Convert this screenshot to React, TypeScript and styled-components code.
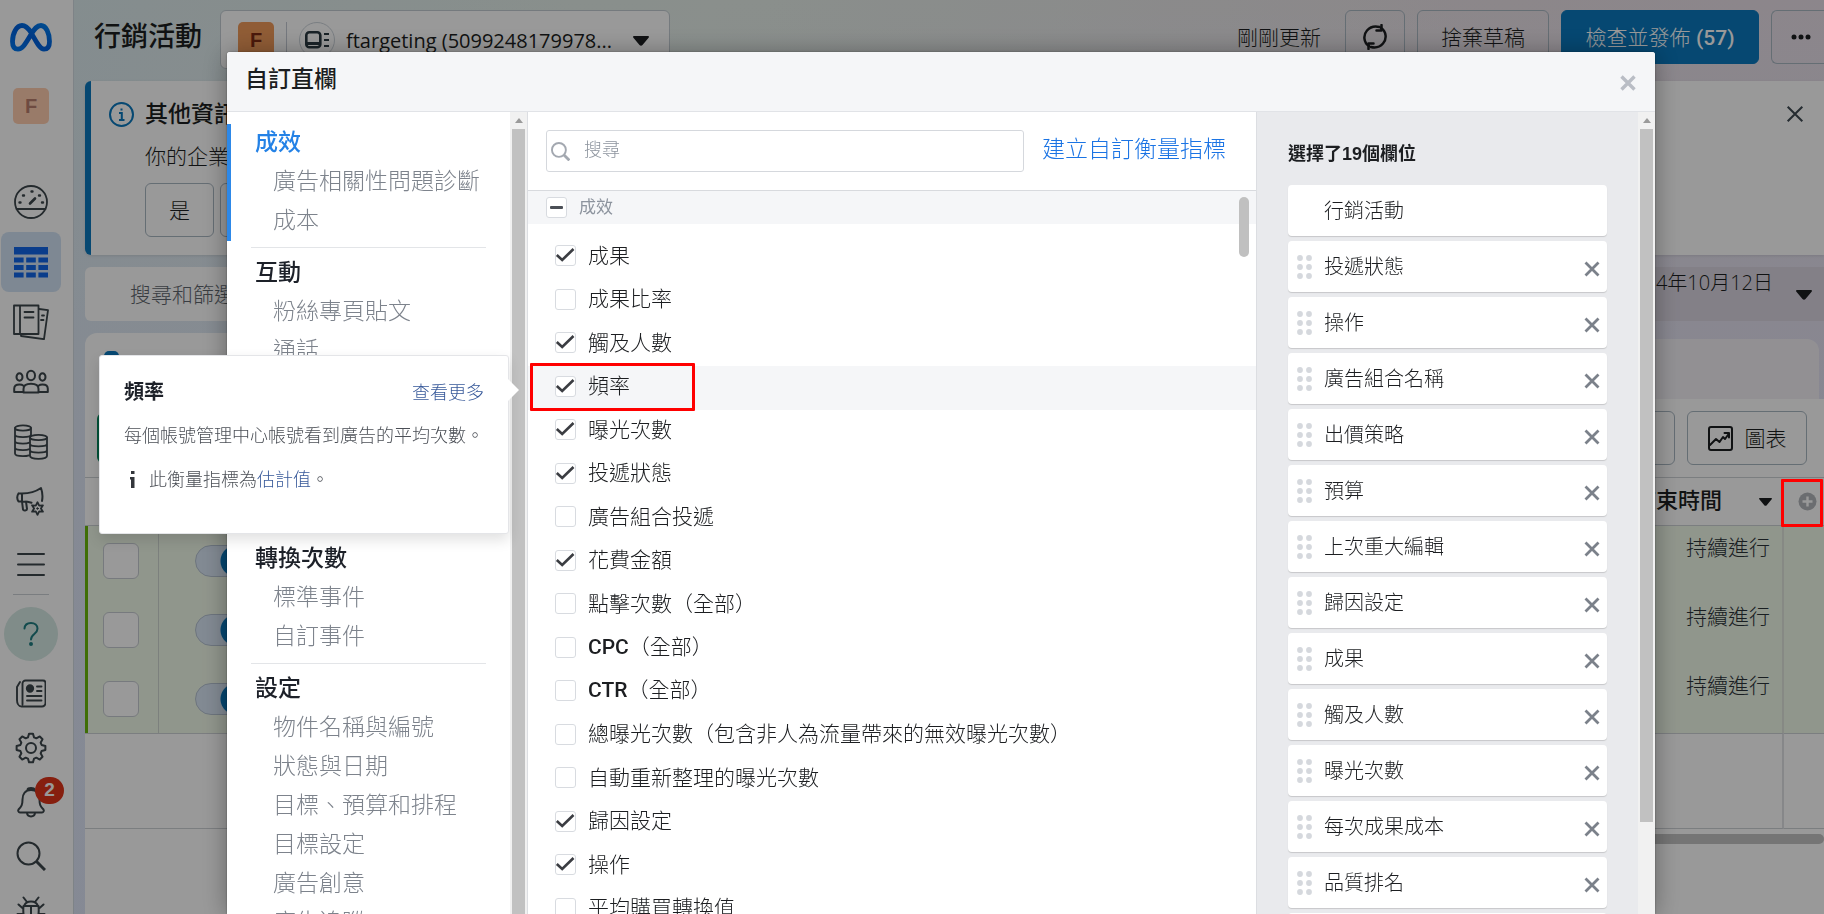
import React, { useState } from 'react';
import styled, { createGlobalStyle, css } from 'styled-components';

const GlobalStyle = createGlobalStyle`
  *, *::before, *::after { box-sizing: border-box; }
  html, body { margin: 0; height: 100%; overflow: hidden; }
  body {
    font-family: "Open Sans", "Noto Sans CJK TC", sans-serif;
    font-weight: 300;
    color: #1c1e21;
    background: #fff;
  }
  button, input { font: inherit; color: inherit; }
  button { padding: 0; border: 0; background: none; cursor: pointer; white-space: nowrap; }
  a { text-decoration: none; }
  h1, h2, h3, p, ul { margin: 0; padding: 0; }
  li { list-style: none; }
  svg { display: block; flex: none; }
`;

/* ---------- page behind the dialog ---------- */

const Page = styled.div`
  display: flex;
  height: 100vh;
  overflow: hidden;
  background:
    linear-gradient(180deg, rgba(222, 228, 250, 0) 0%, rgba(222, 228, 250, 0.8) 60%),
    linear-gradient(100deg, #dcebee 0%, #e6efe9 36%, #e9e1e7 76%, #e9dfe9 100%);
`;

const Sidebar = styled.nav`
  flex: none;
  width: 74px;
  height: 100%;
  padding: 23px 12px 0 1px;
  display: flex;
  flex-direction: column;
  align-items: center;
  background: #fff;
  border-right: 1px solid #d3dae2;
  color: #3c464c;
`;

const Avatar = styled.span<{ $tone: 'pale' | 'strong' }>`
  display: grid;
  place-items: center;
  flex: none;
  width: 36px;
  height: 36px;
  border-radius: 5px;
  font-family: "Liberation Sans", sans-serif;
  font-weight: 700;
  font-size: 20px;
  ${(p) => (p.$tone === 'pale'
    ? css`background: #ffceb0; color: #b87e6d;`
    : css`background: #f09a5a; color: #7d2a12;`)}
`;

const SideGroup = styled.ul<{ $top: number }>`
  margin-top: ${(p) => p.$top}px;
`;

const SideButton = styled.button<{ $size: number; $active?: boolean }>`
  position: relative;
  display: grid;
  place-items: center;
  width: 60px;
  height: ${(p) => p.$size}px;
  border-radius: 8px;
  background: ${(p) => (p.$active ? '#d2e3f5' : 'transparent')};
  color: ${(p) => (p.$active ? '#1267e8' : 'inherit')};
`;

const Badge = styled.span`
  position: absolute;
  top: 2px;
  right: -3px;
  width: 29px;
  height: 27px;
  border-radius: 14px;
  background: #e0341a;
  color: #fff;
  font: 700 19px/26px "Liberation Sans", sans-serif;
  text-align: center;
`;

const SideRule = styled.hr`
  width: 36px;
  margin: 2px 0 12px;
  border: 0;
  border-top: 1px solid #ccd0d5;
`;

const HelpButton = styled.button`
  display: grid;
  place-items: center;
  flex: none;
  width: 54px;
  height: 54px;
  border-radius: 50%;
  background: #d5e9e4;
  color: #1f7d80;
`;

const Content = styled.div`
  flex: 1;
  min-width: 0;
  display: flex;
  flex-direction: column;
  padding-left: 11px;
`;

const TopBar = styled.header`
  display: flex;
  align-items: flex-start;
  flex: none;
  height: 81px;
  padding: 10px 0 0 9px;
`;

const PageTitle = styled.h1`
  margin-right: 18px;
  font-size: 27px;
  line-height: 52px;
  font-weight: 500;
  white-space: nowrap;
`;

const AccountPicker = styled.button`
  display: flex;
  align-items: flex-start;
  width: 450px;
  height: 59px;
  padding: 11px 20px 0 17px;
  background: #fff;
  border: 1px solid #c3ccd3;
  border-radius: 6px;
  font-size: 20px;
  font-weight: 400;
  line-height: 28px;
  text-align: left;
`;

const PickerRule = styled.span`
  width: 1px;
  height: 36px;
  margin: 0 12px;
  background: #c3c9d3;
`;

const PickerIcon = styled.span`
  display: grid;
  place-items: center;
  width: 36px;
  height: 36px;
  margin-right: 11px;
  border: 1px solid #ccd3da;
  border-radius: 50%;
`;

const PickerName = styled.span`
  flex: 1;
  padding-top: 5px;
`;

const PickerCaret = styled.span`
  padding-top: 14px;
`;

const TopActions = styled.div`
  display: flex;
  gap: 12px;
  margin-left: auto;
`;

const Updated = styled.span`
  margin-right: 12px;
  font-size: 21px;
  line-height: 54px;
  white-space: nowrap;
`;

const Button = styled.button<{ $width: number; $primary?: boolean; $cut?: boolean }>`
  display: flex;
  align-items: center;
  justify-content: center;
  gap: 12px;
  flex: none;
  width: ${(p) => p.$width}px;
  height: 54px;
  border: 1px solid #a9b7c2;
  border-radius: 6px;
  font-size: 21px;
  ${(p) => p.$primary && css`
    border-color: #0a78be;
    background: #0a78be;
    color: #fff;
  `}
  ${(p) => p.$cut && css`
    border-right: 0;
    border-radius: 6px 0 0 6px;
    padding-left: 6px;
  `}
`;

const ButtonText = styled.span`
  padding-bottom: 3px;
`;

const Strong = styled.span`
  font-family: Roboto, "Liberation Sans", sans-serif;
  font-weight: 500;
`;

const Notice = styled.section`
  flex: none;
  display: flex;
  align-items: flex-start;
  height: 174px;
  margin-bottom: 12px;
  padding: 19px 20px 0 18px;
  border-left: 6px solid #0a78be;
  border-radius: 6px 0 0 6px;
  background: #fff;
  box-shadow: 0 1px 3px rgba(0, 0, 0, 0.1);
`;

const NoticeIcon = styled.span`
  margin: 2px 11px 0 0;
`;

const NoticeBody = styled.div`
  flex: 1;
`;

const NoticeTitle = styled.h2`
  font-size: 23px;
  line-height: 26px;
  font-weight: 500;
`;

const NoticeText = styled.p`
  margin: 15px 0 12px;
  font-size: 21px;
  line-height: 30px;
`;

const ButtonRow = styled.div`
  display: flex;
  gap: 6px;
`;

const NoticeClose = styled.button`
  margin-top: 5px;
`;

const FilterRow = styled.div`
  display: flex;
  flex: none;
  height: 54px;
  margin-bottom: 12px;
`;

const FilterInput = styled.input`
  flex: 1;
  min-width: 0;
  padding: 0 0 0 45px;
  border: 0;
  border-radius: 6px 0 0 6px;
  background: #fff;
  font-size: 21px;
  &::placeholder { color: #5f676e; opacity: 1; }
`;

const DateButton = styled.button`
  display: flex;
  align-items: flex-start;
  justify-content: flex-end;
  gap: 23px;
  width: 420px;
  padding: 2px 12px 0 0;
  background: #dbd6e2;
  font-size: 20px;
  line-height: 28px;
`;

const DateCaret = styled.span`
  padding-top: 21px;
`;

const TabRow = styled.div`
  display: flex;
  align-items: flex-end;
  flex: none;
  height: 66px;
  padding-right: 5px;
`;

const ActiveTab = styled.div`
  width: 460px;
  height: 66px;
  padding: 18px 0 0 19px;
  border-radius: 12px 12px 0 0;
  background: #fff;
`;

const TabIcon = styled.span`
  display: block;
  width: 15px;
  height: 20px;
  border-radius: 5px;
  background: #0a78be;
`;

const RestTabs = styled.div`
  flex: 1;
  height: 60px;
  border-radius: 0 12px 0 0;
  background: #f3f1f6;
`;

const Panel = styled.section`
  flex: 1;
  min-height: 0;
  background: #fff;
`;

const PanelBar = styled.div`
  display: flex;
  gap: 12px;
  height: 78px;
  padding: 12px 17px 0 12px;
`;

const CreateButton = styled.button`
  width: 110px;
  height: 50px;
  margin: 2px auto 0 0;
  border-radius: 6px;
  background: #00855a;
  color: #fff;
  font-size: 21px;
`;

const Table = styled.table`
  width: 100%;
  border-collapse: separate;
  border-spacing: 0;
  table-layout: fixed;
`;

const HeadCell = styled.th<{ $width?: number }>`
  width: ${(p) => (p.$width ? `${p.$width}px` : 'auto')};
  height: 49px;
  padding: 0 12px 0 0;
  border-top: 1px solid #ced2d6;
  border-bottom: 1px solid #ced2d6;
  font-size: 22px;
  font-weight: 500;
  text-align: right;
`;

const HeadLabel = styled.span`
  display: flex;
  align-items: center;
  justify-content: flex-end;
  gap: 37px;
  line-height: 26px;
  white-space: nowrap;
`;

const HeadText = styled.span`
  padding-bottom: 5px;
`;

const AddColumn = styled.button`
  display: block;
  margin-left: 14px;
`;

const Cell = styled.td<{ $kind?: 'first' | 'line' | 'time' }>`
  height: 69px;
  padding: 0;
  vertical-align: top;
  background: #f1faea;
  ${(p) => p.$kind === 'first' && css`
    border-left: 3px solid #69b80a;
    border-right: 1px solid #cfd6d0;
    padding: 17px 0 0 15px;
  `}
  ${(p) => p.$kind === 'line' && css`padding: 19px 0 0 36px;`}
  ${(p) => p.$kind === 'time' && css`
    padding: 6px 12px 0 0;
    border-right: 2px solid #dfe4dc;
    font-size: 21px;
    line-height: 30px;
    text-align: right;
    color: #2a3238;
  `}
`;

const FootCell = styled.td<{ $ruled?: boolean }>`
  height: 96px;
  border-top: 1px solid #ced2d6;
  border-bottom: 1px solid #ced2d6;
  ${(p) => p.$ruled && css`border-right: 2px solid #e0e2e4;`}
`;

const RowCheck = styled.input`
  display: block;
  appearance: none;
  width: 36px;
  height: 36px;
  margin: 0;
  border: 1px solid #c7ccd2;
  border-radius: 6px;
  background: #fff;
`;

const Toggle = styled.input`
  display: block;
  appearance: none;
  width: 56px;
  height: 32px;
  margin: 0;
  border: 1px solid #b6c3d2;
  border-radius: 16px;
  background: radial-gradient(circle at 40px 50%, #0a78be 15px, #d9e6f5 16px);
`;

const TrackBar = styled.div`
  width: 40%;
  height: 10px;
  margin: 5px 0 0 auto;
  border-radius: 5px;
  background: #c3c3c3;
`;

/* ---------- dialog layer ---------- */

const Layer = styled.div`
  position: fixed;
  inset: 0;
  padding: 52px 169px 0 227px;
  background: rgba(0, 0, 0, 0.4);
`;

const Dialog = styled.section`
  display: flex;
  flex-direction: column;
  height: 100%;
  overflow: hidden;
  border-radius: 3px 3px 0 0;
  background: #fff;
  box-shadow: 0 2px 26px rgba(0, 0, 0, 0.35), 0 0 2px rgba(0, 0, 0, 0.4);
`;

const DialogHead = styled.header`
  display: flex;
  align-items: center;
  justify-content: space-between;
  flex: none;
  height: 60px;
  padding: 0 19px 8px 18px;
  border-bottom: 1px solid #e1e3e7;
  background: #f5f6f8;
`;

const DialogTitle = styled.h2`
  font-size: 23px;
  line-height: 30px;
  font-weight: 500;
`;

const DialogClose = styled.button`
  padding-top: 10px;
`;

const DialogBody = styled.div`
  display: grid;
  grid-template-columns: 301px minmax(0, 1fr) 398px;
  flex: 1;
  min-height: 0;
`;

const NavPane = styled.nav`
  display: flex;
  min-height: 0;
  border-right: 1px solid #dcdee2;
`;

const NavList = styled.div`
  flex: 1;
  padding-top: 12px;
  overflow: hidden;
`;

const NavSection = styled.section<{ $active?: boolean }>`
  border-left: 4px solid ${(p) => (p.$active ? '#2d88e8' : 'transparent')};
`;

const NavRule = styled.hr`
  margin: 6px 24px;
  border: 0;
  border-top: 1px solid #e3e5e8;
`;

const NavHeading = styled.a<{ $active?: boolean }>`
  display: block;
  height: 39px;
  padding-left: 24px;
  font-size: 23px;
  line-height: 34px;
  font-weight: 500;
  color: ${(p) => (p.$active ? '#2482e6' : '#1d2129')};
`;

const NavItem = styled.a`
  display: block;
  height: 39px;
  padding-left: 42px;
  font-size: 23px;
  line-height: 34px;
  white-space: nowrap;
  color: #7d838c;
`;

const Scrollbar = styled.div`
  display: flex;
  flex-direction: column;
  align-items: center;
  flex: none;
  width: 17px;
  height: 100%;
  padding-top: 6px;
  background: #f1f1f1;
`;

const Thumb = styled.div<{ $gap?: number }>`
  flex: 1;
  width: 13px;
  margin: 6px 0 ${(p) => p.$gap || 0}px;
  background: #c1c1c1;
`;

const MetricsPane = styled.div`
  display: flex;
  flex-direction: column;
  min-height: 0;
  border-right: 1px solid #dcdee2;
`;

const SearchRow = styled.div`
  display: flex;
  align-items: center;
  gap: 18px;
  flex: none;
  height: 79px;
  padding: 0 30px 0 18px;
  border-bottom: 1px solid #d8dade;
`;

const SearchField = styled.label`
  display: flex;
  align-items: center;
  gap: 14px;
  flex: 1;
  min-width: 0;
  height: 42px;
  padding: 0 4px;
  border: 1px solid #d5d8dd;
  border-radius: 3px;
`;

const GlyphWrap = styled.span`
  display: block;
  color: #a3a8b0;
`;

const SearchInput = styled.input`
  flex: 1;
  min-width: 0;
  height: 36px;
  padding: 0 0 4px;
  border: 0;
  outline: 0;
  background: none;
  font-size: 18px;
  &::placeholder { color: #8d949e; opacity: 1; }
`;

const CustomLink = styled.a`
  padding-bottom: 6px;
  font-size: 23px;
  line-height: 30px;
  white-space: nowrap;
  color: #1b74e4;
`;

const MetricsScroll = styled.div`
  position: relative;
  flex: 1;
  min-height: 0;
  overflow: hidden;
`;

const OverlayThumb = styled.div`
  position: absolute;
  top: 6px;
  right: 7px;
  width: 10px;
  height: 60px;
  border-radius: 5px;
  background: #c0c0c0;
`;

const GroupHead = styled.label`
  display: flex;
  align-items: center;
  gap: 12px;
  height: 33px;
  padding-left: 18px;
  background: #f5f6f8;
  font-size: 17px;
  line-height: 24px;
  font-weight: 400;
  color: #8d949e;
`;

const MetricList = styled.ul`
  display: grid;
  grid-auto-rows: 43px 44px;
  padding-top: 12px;
`;

const MetricItem = styled.li<{ $hover?: boolean }>`
  position: relative;
  display: flex;
  background: ${(p) => (p.$hover ? '#f5f6f8' : 'transparent')};
`;

const MetricLabel = styled.label`
  display: flex;
  align-items: center;
  gap: 12px;
  padding: 0 0 4px 27px;
  font-size: 21px;
  line-height: 30px;
  white-space: nowrap;
  cursor: pointer;
`;

const LabelText = styled.span`
  padding-bottom: 2px;
`;

const Tick = styled.span`
  display: grid;
  flex: none;
  > * { grid-area: 1 / 1; }
  > svg { pointer-events: none; }
`;

const TickInput = styled.input`
  appearance: none;
  width: 21px;
  height: 21px;
  margin: 0;
  border: 1px solid #d8dbe0;
  border-radius: 3px;
  background: #fff;
`;

const rowMark = css`
  left: 2px;
  top: -3px;
  width: 165px;
  height: 48px;
`;

const columnMark = css`
  right: 1px;
  top: 479px;
  width: 42px;
  height: 48px;
`;

const RedMark = styled.span<{ $on: 'row' | 'column' }>`
  position: absolute;
  border: 3px solid #f00;
  border-radius: 1px;
  pointer-events: none;
  ${(p) => (p.$on === 'row' ? rowMark : columnMark)}
`;

const ChosenPane = styled.aside`
  display: flex;
  min-height: 0;
  background: #e9eaed;
`;

const ChosenList = styled.div`
  flex: 1;
  padding: 31px 31px 0;
  overflow: hidden;
`;

const ChosenTitle = styled.h3`
  margin-bottom: 20px;
  font-family: "Liberation Sans", "Noto Sans CJK TC", sans-serif;
  font-size: 18px;
  line-height: 22px;
  font-weight: 700;
  white-space: nowrap;
`;

const ChosenItems = styled.ul`
  display: flex;
  flex-direction: column;
  gap: 5px;
`;

const ChosenCard = styled.li`
  display: flex;
  align-items: center;
  height: 51px;
  padding: 0 7px 0 8px;
  border-radius: 4px;
  background: #fff;
  box-shadow: 0 1px 1px rgba(0, 0, 0, 0.15);
  font-size: 20px;
  line-height: 28px;
`;

const Handle = styled.span`
  width: 28px;
`;

const CardName = styled.span`
  flex: 1;
`;

const RemoveButton = styled.button`
  padding-top: 4px;
`;

/* ---------- metric tooltip ---------- */

const Tip = styled.aside`
  position: absolute;
  left: 99px;
  top: 355px;
  width: 410px;
  height: 179px;
  padding: 22px 24px 0;
  border: 1px solid #e4e5e8;
  border-radius: 3px;
  background: #fff;
  box-shadow: 0 6px 14px rgba(0, 0, 0, 0.12);
  font-size: 18px;
  line-height: 28px;
  color: #4b4f56;
`;

const TipArrow = styled.svg`
  position: absolute;
  left: 408px;
  top: 23px;
`;

const TipHead = styled.div`
  display: flex;
  justify-content: space-between;
  margin-bottom: 15px;
`;

const TipTitle = styled.h3`
  font-size: 20px;
  line-height: 28px;
  font-weight: 700;
  color: #1d2129;
`;

const TipLink = styled.a`
  color: #365899;
`;

const TipNote = styled.p`
  display: flex;
  align-items: center;
  gap: 11px;
  margin-top: 16px;
`;

/* ---------- drawings ---------- */

const Icon = ({ size = 36, children, w = 2 }: { size?: number; w?: number; children: React.ReactNode }) => (
  <svg width={size} height={size} viewBox={`0 0 ${size} ${size}`} fill="none" stroke="currentColor" strokeWidth={w}
    strokeLinecap="round" strokeLinejoin="round" aria-hidden="true">{children}</svg>
);

const MetaLogo = () => (
  <svg width="42" height="29" viewBox="0 0 42 29" fill="none" aria-hidden="true">
    <defs>
      <linearGradient id="metaBlue" x1="0" x2="1" y1="1" y2="0">
        <stop offset="0" stopColor="#0078f0" />
        <stop offset="0.5" stopColor="#0060dd" />
        <stop offset="1" stopColor="#0080f0" />
      </linearGradient>
    </defs>
    <path d="M21 9.500C18 4.800 15.300 2.500 12 2.500C6.500 2.500 2.500 10.500 2.500 18.500C2.500 23.500 4.600 26.200 8 26.200C12 26.200 14.500 22.500 21 11.500C24.500 5.500 27 2.500 31 2.500C36 2.500 39.500 10 39.500 18.500C39.500 23.500 37.600 26.200 34 26.200C30 26.200 27.500 21 21 9.500Z"
      stroke="url(#metaBlue)" strokeWidth="4.800" strokeLinejoin="round" />
  </svg>
);

const GaugeIcon = () => (
  <Icon w={1.8}>
    <circle cx="18" cy="18" r="16" />
    <path d="M3.500 25h29" />
    <path d="M17 19.500l5-5" strokeWidth="2.600" />
    <path d="M6.500 18.500h1M29 18.500h1M10 11.500h1M18.500 7.500h1M26 11.500h1" strokeWidth="2.400" />
  </Icon>
);

const TableIcon = () => (
  <svg width="34" height="31" viewBox="0 0 34 31" fill="currentColor" aria-hidden="true">
    <rect width="34" height="7.500" />
    {[10.5, 18, 25.5].map((y) => [0, 12.2, 24.4].map((x) => (
      <rect key={`${x}-${y}`} x={x} y={y} width="9.600" height="5" />
    )))}
  </svg>
);

const BooksIcon = () => (
  <Icon w={1.8}>
    <path d="M1 1.500h24.500v28.500H1zM7 1.500v28.500M11.500 8h9M11.500 13.500h9" />
    <path d="M26 5l9 1.200-4 29-23-3.200v-2M29 11.500h2M28 16h2.500" />
  </Icon>
);

const PeopleIcon = () => (
  <Icon w={2}>
    <ellipse cx="18" cy="11.500" rx="4" ry="4.800" />
    <path d="M10.500 28.500v-3.500c0-3.500 3.400-5.200 7.500-5.200s7.500 1.700 7.500 5.200v3.500z" />
    <ellipse cx="6.500" cy="13" rx="3" ry="3.700" />
    <ellipse cx="29.500" cy="13" rx="3" ry="3.700" />
    <path d="M10 28H1.200v-3.200c0-2.800 2.500-4.200 5.300-4.200 1.600 0 3 .4 4 1.200M26 28h8.800v-3.200c0-2.800-2.500-4.200-5.300-4.200-1.600 0-3 .4-4 1.200" />
  </Icon>
);

const CoinsIcon = () => (
  <Icon w={1.8}>
    <ellipse cx="10" cy="4" rx="8" ry="2.600" />
    <path d="M2 4v25.500c0 1.600 3.500 2.600 8 2.600 2.500 0 4.500-.3 6-.8M18 4v7.500M2 10.500c0 1.600 3.500 2.600 8 2.600s8-1 8-2.600M2 17c0 1.600 3.500 2.600 8 2.600 2.500 0 5-.3 6.500-1M2 23.500c0 1.600 3.500 2.600 8 2.600 2.500 0 5-.3 6.500-1" />
    <ellipse cx="25.500" cy="13.500" rx="8.500" ry="2.600" />
    <path d="M17 13.500v18.500c0 1.600 3.800 2.800 8.500 2.800s8.500-1.200 8.500-2.800V13.500M17 19.800c0 1.600 3.800 2.600 8.500 2.600s8.500-1 8.500-2.600M17 26c0 1.600 3.800 2.600 8.500 2.600s8.500-1 8.500-2.600" />
  </Icon>
);

const gearPath = (cx: number, cy: number, outer: number, inner: number, teeth: number) => {
  const points: string[] = [];
  for (let i = 0; i < teeth; i += 1) {
    const base = (i / teeth) * Math.PI * 2 - Math.PI / 2;
    const half = Math.PI / teeth;
    [[-0.72, inner], [-0.34, outer], [0.34, outer], [0.72, inner]].forEach(([t, r]) => {
      const a = base + t * half;
      points.push(`${(cx + r * Math.cos(a)).toFixed(2)} ${(cy + r * Math.sin(a)).toFixed(2)}`);
    });
  }
  return `M${points.join('L')}Z`;
};

const starPath = (cx: number, cy: number, outer: number, inner: number, tips: number) => {
  const points: string[] = [];
  for (let i = 0; i < tips * 2; i += 1) {
    const r = i % 2 ? inner : outer;
    const a = (i / tips) * Math.PI - Math.PI / 2;
    points.push(`${(cx + r * Math.cos(a)).toFixed(2)} ${(cy + r * Math.sin(a)).toFixed(2)}`);
  }
  return `M${points.join('L')}Z`;
};

const MegaphoneIcon = () => (
  <Icon w={2}>
    <path d="M5.500 9.500h3.500c8 0 14-2 19-5.500 1.400 4 1.800 9 1 13M5.500 9.500c-1.600 2.500-1.600 5.500 0 8h4c4 0 7 .5 9 1.200M9 9.500v8M9 17.500l1 8c.4 1.500 4 1.200 4-.5l-1-7.500" />
    <path d={starPath(24.5, 24.5, 6.3, 3.4, 6)} strokeWidth="1.800" />
    <circle cx="24.500" cy="24.500" r="0.800" fill="currentColor" strokeWidth="1" />
  </Icon>
);

const MenuIcon = () => <Icon w={2}><path d="M5 10h26M5 20.500h26M5 31h26" /></Icon>;

const QuestionIcon = () => (
  <Icon size={30} w={2}>
    <path d="M8.500 9.500C8.800 6 11.500 4 15 4c3.800 0 6.500 2.400 6.500 5.700 0 5.300-6.500 5.300-6.500 10.800" />
    <circle cx="15" cy="25" r="1" fill="currentColor" />
  </Icon>
);

const NewsIcon = () => (
  <Icon size={30} w={1.9}>
    <path d="M6.500 25.500V4.500a3 3 0 0 1 3-3H27a2.500 2.500 0 0 1 2.500 2.500v20a3.500 3.500 0 0 1-3.500 3.500H5.500C2.500 27.500 1 24 1 21V8l3-5" />
    <circle cx="14" cy="9.500" r="3.200" fill="currentColor" />
    <path d="M21 7.500h4.500M21 12h4.500M11 17h14.500M11 21.500h14.500" />
  </Icon>
);

const GearIcon = () => (
  <Icon size={32} w={2}>
    <path d={gearPath(16, 16, 14.5, 11, 8)} />
    <circle cx="16" cy="16" r="5" />
  </Icon>
);

const BellIcon = () => (
  <Icon size={32} w={2}>
    <path d="M16 4c-6 0-8.500 4.500-8.500 9.500 0 5.500-1 7-4 10-.8 1 0 3 1.500 3h22c1.500 0 2.300-2 1.500-3-3-3-4-4.500-4-10C24.500 8.500 22 4 16 4zM12.500 3.500c.5-2 6.500-2 7 0M12 27c.4 4.500 7.600 4.500 8 0" />
  </Icon>
);

const SearchIcon = ({ size = 30, w = 2 }: { size?: number; w?: number }) => (
  <svg width={size} height={size} viewBox="0 0 30 30" fill="none" stroke="currentColor" strokeWidth={w} aria-hidden="true">
    <circle cx="12.500" cy="12.500" r="11" />
    <path d="M20.500 20.500l8.500 8.500" strokeWidth={w * 1.5} />
  </svg>
);

const BugIcon = () => (
  <Icon size={30} w={2}>
    <path d="M8 11c1-3 4-4.500 7-4.500s6 1.500 7 4.500zM7.500 11c-1 10 1 16 7.500 17.500C21.500 27 23.500 21 22.500 11M15 11v17M11 7L7.500 2.500M19 7l3.500-4.500M7 13.500L2.500 9.500M7 19H1.500M23 13.500l4.500-4M23 19h5.500M8 24l-4.500 4M22 24l4.500 4" />
  </Icon>
);

const Caret = ({ w = 16 }: { w?: number }) => (
  <svg width={w} height="10" viewBox="0 0 16 10" fill="currentColor" aria-hidden="true">
    <path d="M1 0h14c1 0 1.300 1 .6 1.700L9.500 9c-.8.900-2.200.9-3 0L.4 1.700C-.3 1 0 0 1 0z" />
  </svg>
);

const Cross = ({ size, w, color }: { size: number; w: number; color: string }) => (
  <svg width={size} height={size} viewBox="0 0 16 16" fill="none" stroke={color} strokeWidth={w} aria-hidden="true">
    <path d="M1.500 1.500l13 13M14.500 1.500l-13 13" />
  </svg>
);

const DeviceIcon = () => (
  <svg width="24" height="18" viewBox="0 0 24 18" fill="none" stroke="#2b3a42" aria-hidden="true">
    <rect x="1.300" y="1.300" width="14" height="15" rx="3" strokeWidth="2.600" />
    <path d="M2 12.500h13" strokeWidth="3" />
    <path d="M19 3h5M19 9h5M19 15h5" strokeWidth="2.200" />
  </svg>
);

const RefreshIcon = () => (
  <Icon size={26} w={2.5}>
    <path d="M7 22C1.500 18.500 1 11 5 6.500 8.500 2.500 13 1.800 17.500 3M19 4c5.500 3.500 6 11 2 15.500-3.500 4-8 4.500-12 3.500" />
    <path d="M19.500 1v5.500h-5M6.500 25v-5.500h5" />
  </Icon>
);

const ChartIcon = () => (
  <Icon size={25} w={2}>
    <rect x="1" y="1" width="23" height="23" rx="2" />
    <path d="M2 19l6-6 3.500 3L15 11l2 2 4-5.500M16.500 7H21v4.500" />
  </Icon>
);

const UpArrow = () => (
  <svg width="8" height="5" viewBox="0 0 8 5" fill="#9a9a9a" aria-hidden="true"><path d="M0 5L4 0l4 5z" /></svg>
);

const HandleDots = () => (
  <svg width="16" height="24" viewBox="0 0 16 24" fill="#d5d8dd" aria-hidden="true">
    {[3, 12, 21].map((y) => [4, 13].map((x) => <circle key={`${x}-${y}`} cx={x} cy={y} r="2.900" />))}
  </svg>
);

const PlusDisc = () => (
  <svg width="19" height="19" viewBox="0 0 19 19" aria-hidden="true">
    <circle cx="9.500" cy="9.500" r="9" fill="#b3b6bb" />
    <path d="M9.500 4.500v10M4.500 9.500h10" stroke="#fff" strokeWidth="2.400" />
  </svg>
);

/* ---------- data ---------- */

const sideTop = [
  { label: '帳號總覽', icon: <GaugeIcon /> },
  { label: '行銷活動', icon: <TableIcon />, active: true },
  { label: '廣告報告', icon: <BooksIcon /> },
  { label: '廣告受眾', icon: <PeopleIcon /> },
  { label: '帳單', icon: <CoinsIcon /> },
  { label: '廣告設定', icon: <MegaphoneIcon /> },
  { label: '所有工具', icon: <MenuIcon /> },
];

const sideBottom = [
  { label: '最新消息', icon: <NewsIcon /> },
  { label: '設定', icon: <GearIcon /> },
  { label: '通知', icon: <BellIcon />, badge: '2' },
  { label: '搜尋', icon: <SearchIcon /> },
  { label: '回報問題', icon: <BugIcon /> },
];

const navSections = [
  { title: '成效', items: ['廣告相關性問題診斷', '成本'] },
  { title: '互動', items: ['粉絲專頁貼文', '通話', '訊息', '影音內容', '點擊次數', '知名度'] },
  { title: '轉換次數', items: ['標準事件', '自訂事件'] },
  { title: '設定', items: ['物件名稱與編號', '狀態與日期', '目標、預算和排程', '目標設定', '廣告創意', '廣告追蹤'] },
];

const metrics: { latin?: string; name: string; on?: boolean }[] = [
  { name: '成果', on: true },
  { name: '成果比率' },
  { name: '觸及人數', on: true },
  { name: '頻率', on: true },
  { name: '曝光次數', on: true },
  { name: '投遞狀態', on: true },
  { name: '廣告組合投遞' },
  { name: '花費金額', on: true },
  { name: '點擊次數（全部）' },
  { latin: 'CPC', name: '（全部）' },
  { latin: 'CTR', name: '（全部）' },
  { name: '總曝光次數（包含非人為流量帶來的無效曝光次數）' },
  { name: '自動重新整理的曝光次數' },
  { name: '歸因設定', on: true },
  { name: '操作', on: true },
  { name: '平均購買轉換值' },
];

const chosen = [
  '行銷活動', '投遞狀態', '操作', '廣告組合名稱', '出價策略', '預算', '上次重大編輯',
  '歸因設定', '成果', '觸及人數', '曝光次數', '每次成果成本', '品質排名', '互動率排名',
];

const MetricRow = ({ latin, name, on }: { latin?: string; name: string; on?: boolean }) => {
  const [checked, setChecked] = useState(!!on);
  const pointed = name === '頻率';
  return (
    <MetricItem $hover={pointed}>
      <MetricLabel>
        <Tick>
          <TickInput type="checkbox" checked={checked} onChange={() => setChecked(!checked)} />
          {checked && (
            <svg width="21" height="21" viewBox="0 0 21 21" fill="none" stroke="#3b3d42" strokeWidth="2.600" aria-hidden="true">
              <path d="M1.800 10l5.400 5L18.500 4" />
            </svg>
          )}
        </Tick>
        <LabelText>{latin && <Strong>{latin}</Strong>}{name}</LabelText>
      </MetricLabel>
      {pointed && <RedMark $on="row" />}
    </MetricItem>
  );
};

export default function App() {
  return (
    <>
      <GlobalStyle />
      <Page>
        <Sidebar>
          <MetaLogo />
          <SideGroup as="div" $top={36}><Avatar $tone="pale">F</Avatar></SideGroup>
          <SideGroup $top={48}>
            {sideTop.map((s) => (
              <li key={s.label}><SideButton $size={60} $active={s.active} aria-label={s.label}>{s.icon}</SideButton></li>
            ))}
          </SideGroup>
          <SideRule />
          <HelpButton aria-label="協助"><QuestionIcon /></HelpButton>
          <SideGroup $top={6}>
            {sideBottom.map((s) => (
              <li key={s.label}>
                <SideButton $size={54} aria-label={s.label}>
                  {s.icon}
                  {s.badge && <Badge>{s.badge}</Badge>}
                </SideButton>
              </li>
            ))}
          </SideGroup>
        </Sidebar>

        <Content>
          <TopBar>
            <PageTitle>行銷活動</PageTitle>
            <AccountPicker aria-haspopup="listbox">
              <Avatar $tone="strong">F</Avatar>
              <PickerRule />
              <PickerIcon><DeviceIcon /></PickerIcon>
              <PickerName>ftargeting (5099248179978...</PickerName>
              <PickerCaret><Caret /></PickerCaret>
            </AccountPicker>
            <TopActions>
              <Updated>剛剛更新</Updated>
              <Button $width={60} aria-label="重新整理"><RefreshIcon /></Button>
              <Button $width={132}><ButtonText>捨棄草稿</ButtonText></Button>
              <Button $width={198} $primary><ButtonText>檢查並發佈 <Strong>(57)</Strong></ButtonText></Button>
              <Button $width={53} $cut aria-label="更多">
                <svg width="20" height="6" viewBox="0 0 20 6" fill="currentColor" aria-hidden="true">
                  <circle cx="3" cy="3" r="2.500" /><circle cx="10" cy="3" r="2.500" /><circle cx="17" cy="3" r="2.500" />
                </svg>
              </Button>
            </TopActions>
          </TopBar>

          <Notice>
            <NoticeIcon>
              <svg width="25" height="25" viewBox="0 0 25 25" fill="none" stroke="#0a78be" strokeWidth="2" aria-hidden="true">
                <circle cx="12.500" cy="12.500" r="11.500" />
                <path d="M10 11h2.800v7M10 18h5.500M12.500 6.500v2" />
              </svg>
            </NoticeIcon>
            <NoticeBody>
              <NoticeTitle>其他資訊</NoticeTitle>
              <NoticeText>你的企業</NoticeText>
              <ButtonRow>
                <Button $width={69}><ButtonText>是</ButtonText></Button>
                <Button $width={69}><ButtonText>否</ButtonText></Button>
              </ButtonRow>
            </NoticeBody>
            <NoticeClose aria-label="關閉通知"><Cross size={18} w={1.8} color="#3f4a52" /></NoticeClose>
          </Notice>

          <FilterRow>
            <FilterInput placeholder="搜尋和篩選" aria-label="搜尋和篩選" />
            <DateButton>2024年10月12日<DateCaret><Caret /></DateCaret></DateButton>
          </FilterRow>

          <TabRow>
            <ActiveTab><TabIcon /></ActiveTab>
            <RestTabs />
          </TabRow>

          <Panel>
            <PanelBar>
              <CreateButton>建立</CreateButton>
              <Button $width={120}>報告</Button>
              <Button $width={120}><ChartIcon /><ButtonText>圖表</ButtonText></Button>
            </PanelBar>
            <Table>
              <thead>
                <tr>
                  <HeadCell $width={74} />
                  <HeadCell />
                  <HeadCell $width={260}>
                    <HeadLabel><HeadText>結束時間</HeadText><Caret w={13} /></HeadLabel>
                  </HeadCell>
                  <HeadCell $width={40}><AddColumn aria-label="新增欄位"><PlusDisc /></AddColumn></HeadCell>
                </tr>
              </thead>
              <tbody>
                {[1, 2, 3].map((n) => (
                  <tr key={n}>
                    <Cell $kind="first"><RowCheck type="checkbox" aria-label={`選取第 ${n} 列`} /></Cell>
                    <Cell $kind="line"><Toggle type="checkbox" defaultChecked aria-label={`啟用第 ${n} 列`} /></Cell>
                    <Cell $kind="time">持續進行</Cell>
                    <Cell />
                  </tr>
                ))}
                <tr>
                  <FootCell /><FootCell /><FootCell $ruled /><FootCell />
                </tr>
              </tbody>
            </Table>
            <TrackBar />
          </Panel>
        </Content>
      </Page>

      <Layer>
        <Dialog role="dialog" aria-label="自訂直欄">
          <DialogHead>
            <DialogTitle>自訂直欄</DialogTitle>
            <DialogClose aria-label="關閉"><Cross size={16} w={3.4} color="#b9bdc5" /></DialogClose>
          </DialogHead>
          <DialogBody>
            <NavPane>
              <NavList>
                {navSections.map((s, i) => (
                  <React.Fragment key={s.title}>
                    {i > 0 && <NavRule />}
                    <NavSection $active={i === 0}>
                      <NavHeading href="#" $active={i === 0}>{s.title}</NavHeading>
                      {s.items.map((t) => <NavItem key={t} href="#">{t}</NavItem>)}
                    </NavSection>
                  </React.Fragment>
                ))}
              </NavList>
              <Scrollbar><UpArrow /><Thumb /></Scrollbar>
            </NavPane>

            <MetricsPane>
              <SearchRow>
                <SearchField>
                  <GlyphWrap><SearchIcon size={19} w={3} /></GlyphWrap>
                  <SearchInput type="text" placeholder="搜尋" aria-label="搜尋" />
                </SearchField>
                <CustomLink href="#">建立自訂衡量指標</CustomLink>
              </SearchRow>
              <MetricsScroll>
                <GroupHead>
                  <Tick>
                    <TickInput type="checkbox" />
                    <svg width="21" height="21" viewBox="0 0 21 21" aria-hidden="true">
                      <rect x="4" y="9" width="13" height="3" rx="1" fill="#4b4f56" />
                    </svg>
                  </Tick>
                  <LabelText>成效</LabelText>
                </GroupHead>
                <MetricList>
                  {metrics.map((m) => <MetricRow key={(m.latin || '') + m.name} {...m} />)}
                </MetricList>
                <OverlayThumb />
              </MetricsScroll>
            </MetricsPane>

            <ChosenPane>
              <ChosenList>
                <ChosenTitle>選擇了19個欄位</ChosenTitle>
                <ChosenItems>
                  {chosen.map((c, i) => (
                    <ChosenCard key={c}>
                      <Handle>{i > 0 && <HandleDots />}</Handle>
                      <CardName>{c}</CardName>
                      {i > 0 && <RemoveButton aria-label={`移除${c}`}><Cross size={16} w={2.8} color="#7b818a" /></RemoveButton>}
                    </ChosenCard>
                  ))}
                </ChosenItems>
              </ChosenList>
              <Scrollbar><UpArrow /><Thumb $gap={92} /></Scrollbar>
            </ChosenPane>
          </DialogBody>
        </Dialog>

        <Tip role="tooltip">
          <TipArrow width="12" height="22" viewBox="0 0 12 22" aria-hidden="true">
            <path d="M0 0l11 11L0 22z" fill="#fff" />
          </TipArrow>
          <TipHead>
            <TipTitle>頻率</TipTitle>
            <TipLink href="#">查看更多</TipLink>
          </TipHead>
          <p>每個帳號管理中心帳號看到廣告的平均次數。</p>
          <TipNote>
            <svg width="14" height="19" viewBox="0 0 14 19" fill="#33363b" aria-hidden="true">
              <path d="M7 1h3.500v3H7zM6 7h4.500v11H7V9.500H6z" />
            </svg>
            <span>此衡量指標為<TipLink href="#">估計值</TipLink>。</span>
          </TipNote>
        </Tip>
        <RedMark $on="column" />
      </Layer>
    </>
  );
}
